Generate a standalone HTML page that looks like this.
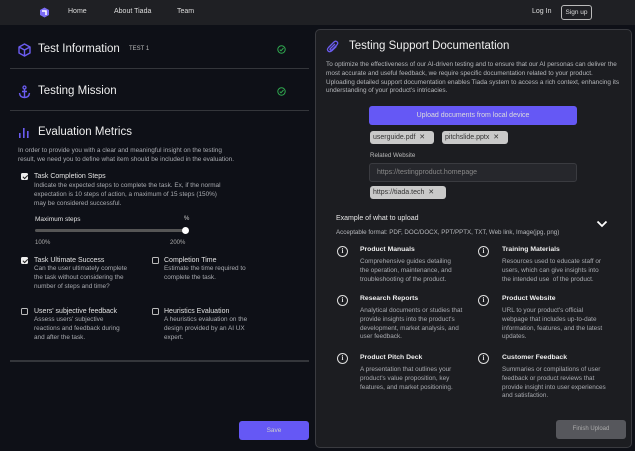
<!DOCTYPE html>
<html><head><meta charset="utf-8"><style>
*{margin:0;padding:0;box-sizing:border-box}
body{width:635px;height:451px;overflow:hidden;background:#0e1017;font-family:"Liberation Sans",sans-serif;color:#e6e6e6;position:relative}
.a{position:absolute;white-space:nowrap}
.nav{position:absolute;left:0;top:0;width:635px;height:25px;background:#1f2024}
.nl{font-size:7px;color:#ddd;top:8px}
.hr{position:absolute;left:10px;width:299px;height:1px;background:#34363b}
.h1{font-size:11.5px;color:#eee}
.p{font-size:6.4px;line-height:8.8px;color:#a9abb0;white-space:normal}
.t{font-size:7px;color:#e2e2e2}
.cb{position:absolute;width:7px;height:7px;border:1px solid #bbb;border-radius:1.5px}
.cb.on{background:#eee;border-color:#eee}
.cb.on::after{content:"";position:absolute;left:1.5px;top:0px;width:2px;height:3.5px;border:solid #222;border-width:0 1px 1px 0;transform:rotate(45deg)}
.panel{position:absolute;left:315px;top:29px;width:317px;height:419px;background:#1c1d21;border:1px solid #3a3b40;border-radius:5px}
.chip{position:absolute;height:13px;background:#c9c9c9;color:#333;border-radius:3px;font-size:7px;line-height:13px;padding-left:3px}
.it{font-size:6.8px;font-weight:bold;color:#eee}
.ic{position:absolute;width:11px;height:11px;border:1.3px solid #ddd;border-radius:50%;font-size:7px;font-weight:bold;text-align:center;line-height:9px;color:#ddd;font-family:"Liberation Serif",serif}
</style></head><body>
<div class="nav"></div>
<svg class="a" style="left:39px;top:7px" width="11" height="11" viewBox="0 0 11 11"><path d="M1 3 L5.5 0.5 L10 3 L10 8 L5.5 10.5 L1 8Z" fill="#7b6cf6"/><path d="M3 4 L7 4 L7 8" stroke="#fff" stroke-width="1.5" fill="none"/></svg>
<div class="a nl" style="left:68px">Home</div>
<div class="a nl" style="left:114px">About Tiada</div>
<div class="a nl" style="left:177px">Team</div>
<div class="a nl" style="left:532px">Log In</div>
<div class="a nl" style="left:561px;top:5px;width:31px;height:15px;border:1px solid #bbb;border-radius:3px;line-height:13px;text-align:center;font-size:6.5px">Sign up</div>

<svg class="a" style="left:18px;top:43px" width="13" height="14" viewBox="0 0 13 14"><path d="M6.5 1 L12 4 L12 10 L6.5 13 L1 10 L1 4Z M1 4 L6.5 7 L12 4 M6.5 7 L6.5 13" stroke="#6b5cf0" stroke-width="1.4" fill="none" stroke-linejoin="round"/></svg>
<div class="a h1" style="left:38px;top:43px">Test Information</div>
<div class="a" style="left:129px;top:46px;font-size:6px;color:#bbb">TEST 1</div>
<svg class="a" style="left:277px;top:45px" width="9" height="9" viewBox="0 0 9 9"><circle cx="4.5" cy="4.5" r="3.7" stroke="#2fa74f" fill="none"/><path d="M2.8 4.6 L4 5.8 L6.5 3" stroke="#2fa74f" fill="none"/></svg>
<div class="hr" style="top:68px"></div>
<svg class="a" style="left:18px;top:85px" width="13" height="14" viewBox="0 0 13 14"><circle cx="6.5" cy="2.5" r="1.5" stroke="#6b5cf0" fill="none" stroke-width="1.3"/><path d="M6.5 4 L6.5 12.5 M1.5 8 Q2 12.5 6.5 12.5 Q11 12.5 11.5 8 M4 6.5 L9 6.5" stroke="#6b5cf0" stroke-width="1.4" fill="none"/></svg>
<div class="a h1" style="left:38px;top:85px">Testing Mission</div>
<svg class="a" style="left:277px;top:87px" width="9" height="9" viewBox="0 0 9 9"><circle cx="4.5" cy="4.5" r="3.7" stroke="#2fa74f" fill="none"/><path d="M2.8 4.6 L4 5.8 L6.5 3" stroke="#2fa74f" fill="none"/></svg>
<div class="hr" style="top:110px"></div>
<svg class="a" style="left:19px;top:127px" width="11" height="11"><rect x="0" y="6" width="1.6" height="5" fill="#6b5cf0"/><rect x="4" y="1" width="1.6" height="10" fill="#6b5cf0"/><rect x="8" y="4" width="1.6" height="7" fill="#6b5cf0"/></svg>
<div class="a h1" style="left:38px;top:126px">Evaluation Metrics</div>
<div class="a p" style="left:18px;top:147px;width:218px">In order to provide you with a clear and meaningful insight on the testing result, we need you to define what item should be included in the evaluation.</div>
<div class="cb on" style="left:21px;top:173px"></div>
<div class="a t" style="left:34px;top:173px">Task Completion Steps</div>
<div class="a p" style="left:34px;top:182px;width:190px">Indicate the expected steps to complete the task. Ex, if the normal expectation is 10 steps of action, a maximum of 15 steps (150%) may be considered successful.</div>
<div class="a t" style="left:35px;top:216px;font-size:6.5px">Maximum steps</div>
<div class="a" style="left:184px;top:216px;font-size:6px;color:#ccc">%</div>
<div class="a" style="left:35px;top:229px;width:152px;height:3px;background:#555;border-radius:2px"></div>
<div class="a" style="left:182px;top:227px;width:7px;height:7px;background:#fff;border-radius:50%"></div>
<div class="a" style="left:35px;top:240px;font-size:6px;color:#aaa">100%</div>
<div class="a" style="left:170px;top:240px;font-size:6px;color:#aaa">200%</div>
<div class="cb on" style="left:21px;top:257px"></div>
<div class="a t" style="left:34px;top:257px">Task Ultimate Success</div>
<div class="a p" style="left:34px;top:265px;width:100px">Can the user ultimately complete the task without considering the number of steps and time?</div>
<div class="cb" style="left:152px;top:257px"></div>
<div class="a t" style="left:164px;top:257px">Completion Time</div>
<div class="a p" style="left:164px;top:265px;width:100px">Estimate the time required to complete the task.</div>
<div class="cb" style="left:21px;top:308px"></div>
<div class="a t" style="left:34px;top:308px">Users' subjective feedback</div>
<div class="a p" style="left:34px;top:316px;width:95px">Assess users' subjective reactions and feedback during and after the task.</div>
<div class="cb" style="left:152px;top:308px"></div>
<div class="a t" style="left:164px;top:308px">Heuristics Evaluation</div>
<div class="a p" style="left:164px;top:316px;width:95px">A heuristics evaluation on the design provided by an AI UX expert.</div>
<div class="hr" style="top:360px;height:2px"></div>
<div class="a" style="left:239px;top:421px;width:70px;height:19px;background:#6558f5;border-radius:3px;font-size:6.5px;color:#ccc;text-align:center;line-height:19px">Save</div>

<div class="panel"></div>
<svg class="a" style="left:326px;top:40px" width="13" height="13" viewBox="0 0 13 13"><path d="M9 4 L4.5 8.5 Q3.5 9.5 4.5 10 Q5.5 10.5 6.3 9.5 L11 4.8 Q12.5 3 11 1.8 Q9.5 0.5 8 2 L2.5 7.5 Q0.5 9.8 2.3 11.2 Q4 12.5 6 10.7 L10.5 6.3" stroke="#6b5cf0" stroke-width="1.3" fill="none"/></svg>
<div class="a" style="left:349px;top:40px;font-size:11.5px;color:#eee">Testing Support Documentation</div>
<div class="a p" style="left:326px;top:61px;width:294px;color:#b5b7bb">To optimize the effectiveness of our AI-driven testing and to ensure that our AI personas can deliver the most accurate and useful feedback, we require specific documentation related to your product. Uploading detailed support documentation enables Tiada system to access a rich context, enhancing its understanding of your product's intricacies.</div>
<div class="a" style="left:369px;top:106px;width:208px;height:19px;background:#6558f5;border-radius:3px;font-size:7px;color:#ddd;text-align:center;line-height:19px">Upload documents from local device</div>
<div class="chip" style="left:370px;top:131px;width:64px">userguide.pdf &nbsp;✕</div>
<div class="chip" style="left:442px;top:131px;width:66px">pitchslide.pptx &nbsp;✕</div>
<div class="a" style="left:370px;top:152px;font-size:6.2px;color:#bbb">Related Website</div>
<div class="a" style="left:369px;top:163px;width:208px;height:19px;background:#26272c;border:1px solid #3a3b40;border-radius:3px;font-size:7px;color:#888;line-height:17px;padding-left:7px">https://testingproduct.homepage</div>
<div class="chip" style="left:370px;top:186px;width:76px">https://tiada.tech &nbsp;✕</div>
<div class="a" style="left:336px;top:215px;font-size:7px;color:#e6e6e6">Example of what to upload</div>
<div class="a" style="left:336px;top:229px;font-size:6.2px;color:#b5b7bb">Acceptable format: PDF, DOC/DOCX, PPT/PPTX, TXT, Web link, Image(jpg, png)</div>
<svg class="a" style="left:596px;top:220px" width="12" height="8"><path d="M1.5 1.5 L6 6 L10.5 1.5" stroke="#fff" stroke-width="1.8" fill="none"/></svg>

<div class="ic" style="left:337px;top:246px">i</div>
<div class="a it" style="left:360px;top:246px">Product Manuals</div>
<div class="a p" style="left:360px;top:258px;width:100px">Comprehensive guides detailing the operation, maintenance, and troubleshooting of the product.</div>
<div class="ic" style="left:478px;top:246px">i</div>
<div class="a it" style="left:502px;top:246px">Training Materials</div>
<div class="a p" style="left:502px;top:258px;width:105px">Resources used to educate staff or users, which can give insights into the intended use &nbsp;of the product.</div>
<div class="ic" style="left:337px;top:295px">i</div>
<div class="a it" style="left:360px;top:295px">Research Reports</div>
<div class="a p" style="left:360px;top:307px;width:110px">Analytical documents or studies that provide insights into the product's development, market analysis, and user feedback.</div>
<div class="ic" style="left:478px;top:295px">i</div>
<div class="a it" style="left:502px;top:295px">Product Website</div>
<div class="a p" style="left:502px;top:307px;width:108px">URL to your product's official webpage that includes up-to-date information, features, and the latest updates.</div>
<div class="ic" style="left:337px;top:353px">i</div>
<div class="a it" style="left:360px;top:354px">Product Pitch Deck</div>
<div class="a p" style="left:360px;top:366px;width:100px">A presentation that outlines your product's value proposition, key features, and market positioning.</div>
<div class="ic" style="left:478px;top:353px">i</div>
<div class="a it" style="left:502px;top:354px">Customer Feedback</div>
<div class="a p" style="left:502px;top:366px;width:112px">Summaries or compilations of user feedback or product reviews that provide insight into user experiences and satisfaction.</div>
<div class="a" style="left:556px;top:420px;width:70px;height:19px;background:#56575c;border-radius:3px;font-size:6px;color:#aaa;text-align:center;line-height:19px">Finish Upload</div>
</body></html>
